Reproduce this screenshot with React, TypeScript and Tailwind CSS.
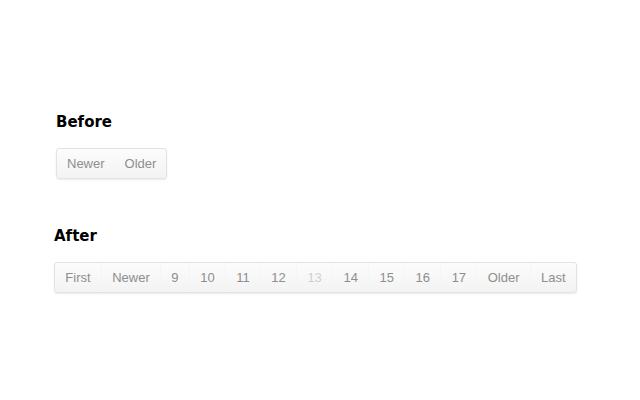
import React from "react";

const sans = { fontFamily: '"Liberation Sans", Arial, sans-serif' };
const head = { fontFamily: '"DejaVu Sans", Verdana, sans-serif' };

function Pager({ items }: { items: { label: string; muted?: boolean }[] }) {
  return (
    <div
      className="inline-flex rounded-[3px] border border-[#e3e3e3] bg-gradient-to-b from-[#fcfcfc] to-[#f3f3f3] shadow-[0_1px_2px_rgba(0,0,0,0.08)]"
      style={sans}
    >
      {items.map((it, i) => (
        <span
          key={i}
          className={
            "px-[10.3px] text-[13px] leading-[29px] " +
            (i > 0 ? "border-l border-[#f5f5f5] " : "") +
            (it.muted ? "text-[#d0d0d0]" : "text-[#8e8e8e]")
          }
        >
          {it.label}
        </span>
      ))}
    </div>
  );
}

export default function App() {
  const after = [
    { label: "First" },
    { label: "Newer" },
    { label: "9" },
    { label: "10" },
    { label: "11" },
    { label: "12" },
    { label: "13", muted: true },
    { label: "14" },
    { label: "15" },
    { label: "16" },
    { label: "17" },
    { label: "Older" },
    { label: "Last" },
  ];
  return (
    <div className="w-[640px] h-[400px] bg-white pt-[112px]">
      <div className="pl-[56px]">
        <h2 className="text-[15px] font-bold leading-[20px] text-black" style={head}>
          Before
        </h2>
        <div className="mt-[16px] flex">
          <div
            className="inline-flex rounded-[3px] border border-[#e3e3e3] bg-gradient-to-b from-[#fcfcfc] to-[#f3f3f3] shadow-[0_1px_2px_rgba(0,0,0,0.08)]"
            style={sans}
          >
            <span className="px-[10px] text-[13px] leading-[29px] text-[#8e8e8e]">Newer</span>
            <span className="px-[10px] text-[13px] leading-[29px] text-[#8e8e8e]">Older</span>
          </div>
        </div>
      </div>
      <div className="pl-[54px] mt-[47px]">
        <h2 className="text-[15px] font-bold leading-[20px] text-black" style={head}>
          After
        </h2>
        <div className="mt-[16px] flex">
          <Pager items={after} />
        </div>
      </div>
    </div>
  );
}
